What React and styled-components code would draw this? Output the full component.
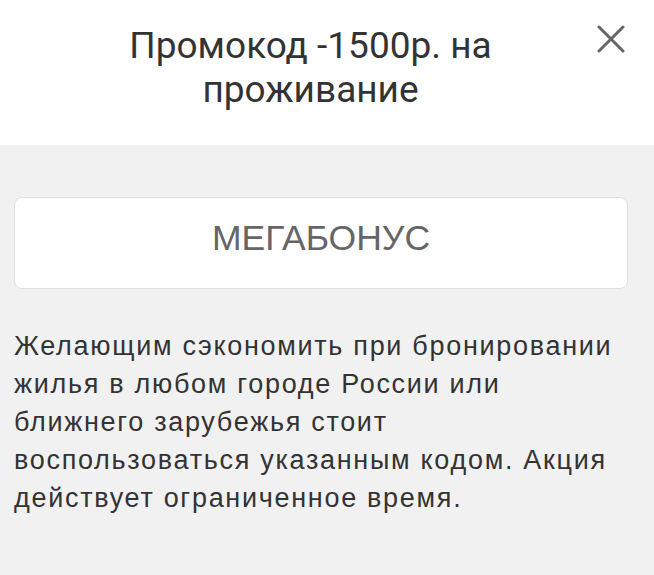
import React from 'react';
import styled, { createGlobalStyle } from 'styled-components';

const GlobalStyle = createGlobalStyle`
  html, body {
    margin: 0;
    padding: 0;
    background: #f1f1f1;
  }
  * {
    box-sizing: border-box;
  }
`;

function CloseIcon() {
  return (
    <svg width="28" height="28" viewBox="0 0 28 28" fill="none">
      <path d="M2 2L26 26M26 2L2 26" stroke="#666" strokeWidth="3" strokeLinecap="round" />
    </svg>
  );
}

export default function App() {
  return (
    <Modal>
      <GlobalStyle />
      <Header>
        <Title>Промокод -1500р. на проживание</Title>
        <CloseButton aria-label="Закрыть">
          <CloseIcon />
        </CloseButton>
      </Header>
      <Body>
        <CodeBox>МЕГАБОНУС</CodeBox>
        <Description>
          Желающим сэкономить при бронировании жилья в любом городе России или
          ближнего зарубежья стоит воспользоваться указанным кодом. Акция
          действует ограниченное время.
        </Description>
      </Body>
    </Modal>
  );
}

const Modal = styled.div`
  width: 654px;
  min-height: 575px;
  display: flex;
  flex-direction: column;
  background: #f1f1f1;
`;

const Header = styled.div`
  position: relative;
  background: #fff;
  padding: 24px 93px 31px 60px;
  height: 145px;
`;

const Title = styled.h1`
  margin: 0;
  font-family: Roboto, "Noto Sans", sans-serif;
  font-weight: 400;
  font-size: 37px;
  line-height: 44px;
  color: #333;
  text-align: center;
`;

const CloseButton = styled.button`
  position: absolute;
  top: 25px;
  right: 29px;
  width: 28px;
  height: 28px;
  padding: 0;
  border: none;
  background: none;
  cursor: pointer;
  display: flex;
`;

const Body = styled.div`
  flex: 1;
  padding: 52px 26px 0 14px;
`;

const CodeBox = styled.div`
  height: 92px;
  background: #fff;
  border: 1px solid #e0e0e0;
  border-radius: 8px;
  display: flex;
  align-items: center;
  justify-content: center;
  padding-bottom: 10px;
  font-family: "Liberation Sans", Arial, sans-serif;
  font-size: 35.5px;
  color: #666;
`;

const Description = styled.p`
  margin: 38px 0 0;
  font-family: "Liberation Sans", Arial, sans-serif;
  font-size: 27px;
  line-height: 38px;
  letter-spacing: 1.7px;
  color: #333;
`;
